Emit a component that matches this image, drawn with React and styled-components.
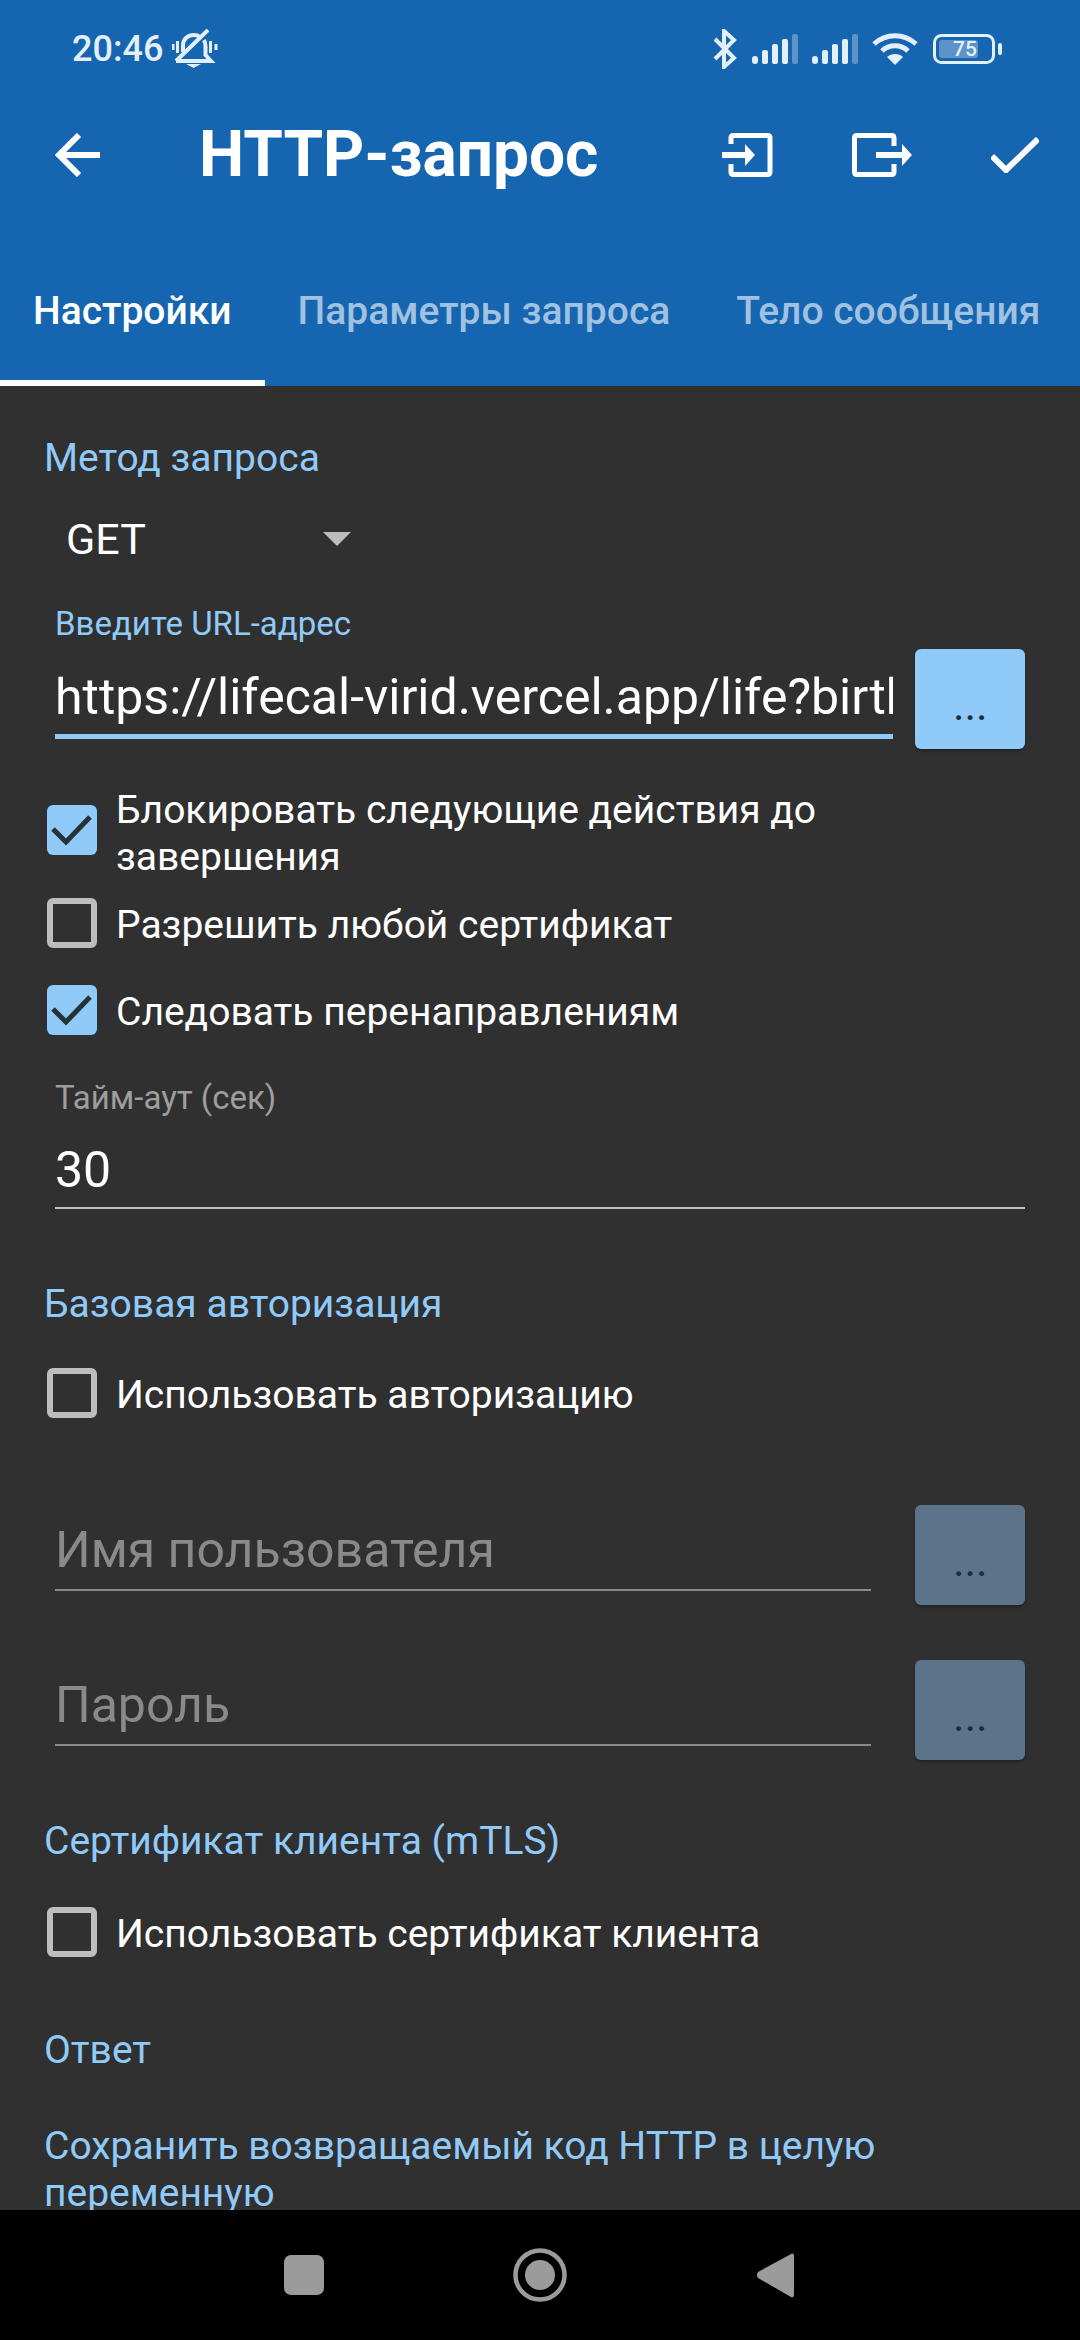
import React from "react";
import styled, { createGlobalStyle } from "styled-components";

const Global = createGlobalStyle`
  html, body { margin: 0; padding: 0; background: #000; }
  * { box-sizing: border-box; }
`;

const Page = styled.div`
  width: 1080px;
  height: 2340px;
  display: flex;
  flex-direction: column;
  overflow: hidden;
  font-family: Roboto, "Noto Sans", sans-serif;
  background: #303030;
  color: #fff;
`;

const Header = styled.header`
  background: #1565b0;
  height: 386px;
  flex: none;
  display: flex;
  flex-direction: column;
`;

const StatusBar = styled.div`
  height: 98px;
  display: flex;
  align-items: center;
  justify-content: space-between;
  padding: 0 78px 0 72px;
  color: #e3f0fb;
`;

const StatusGroup = styled.div`
  display: flex;
  align-items: center;
  gap: ${p => p.$gap || 0}px;
`;

const StatusGap = styled.span`
  flex: none;
  width: ${p => p.$w}px;
`;

const Clock = styled.span`
  font-size: 36px;
  font-weight: 500;
  line-height: 40px;
`;

const BatteryWrap = styled.div`
  position: relative;
  width: 69px;
  height: 30px;
`;

const BatteryText = styled.span`
  position: absolute;
  left: 6px;
  width: 52px;
  top: 0;
  text-align: center;
  font-size: 21px;
  font-weight: 500;
  line-height: 30px;
  color: #e3f0fb;
`;

const Toolbar = styled.div`
  height: 114px;
  display: flex;
  align-items: center;
  padding-left: 55px;
`;

const ToolbarTitle = styled.h1`
  margin: 0 0 0 99px;
  width: 523px;
  font-size: 64px;
  font-weight: 700;
  line-height: 66px;
  color: #fff;
  white-space: nowrap;
`;

const ToolIcon = styled.svg`
  display: block;
  flex: none;
  margin-left: ${p => p.$ml || 0}px;
`;

const TabBar = styled.nav`
  margin-top: 22px;
  height: 152px;
  display: flex;
  overflow: hidden;
`;

const Tab = styled.div`
  flex: none;
  display: flex;
  align-items: center;
  padding: 8px ${p => p.$pad}px 0;
  font-size: 39px;
  font-weight: 500;
  white-space: nowrap;
  color: ${p => (p.$active ? "#ffffff" : "#a1c1e0")};
  border-bottom: 6px solid ${p => (p.$active ? "#ffffff" : "transparent")};
`;

const Content = styled.main`
  flex: 1;
  min-height: 0;
  overflow: hidden;
  padding: 0 55px 0 44px;
`;

const SectionLabel = styled.div`
  margin-top: ${p => p.$mt}px;
  font-size: 39px;
  line-height: 47px;
  color: #90caf9;
`;

const Spinner = styled.div`
  margin-top: 22px;
  margin-left: 1px;
  height: 70px;
  width: 306px;
  padding-left: 21px;
  display: flex;
  align-items: center;
  justify-content: space-between;
  font-size: 43px;
  color: #fff;
`;

const SpinnerArrow = styled.span`
  width: 0;
  height: 0;
  border-left: 14px solid transparent;
  border-right: 14px solid transparent;
  border-top: 14px solid #bdbdbd;
`;

const FieldLabel = styled.div`
  margin-top: ${p => p.$mt}px;
  margin-left: 11px;
  font-size: 33px;
  line-height: 36px;
  color: ${p => p.$color || "#90caf9"};
`;

const FieldRow = styled.div`
  margin-top: ${p => p.$mt || 0}px;
  margin-left: 11px;
  display: flex;
  align-items: flex-start;
  justify-content: space-between;
`;

const Input = styled.div`
  width: ${p => p.$w};
  flex: none;
  overflow: hidden;
  white-space: nowrap;
  padding: ${p => p.$pt}px 0 ${p => p.$pb}px;
  font-size: 50px;
  line-height: 60px;
  color: ${p => p.$color || "#fff"};
  border-bottom: ${p => p.$line || "2px solid #bdbdbd"};
`;

const MoreButton = styled.div`
  width: 110px;
  height: 100px;
  flex: none;
  border-radius: 6px;
  display: flex;
  justify-content: center;
  padding: 38px 0 0 2px;
  font-size: 36px;
  font-weight: 500;
  letter-spacing: 1.5px;
  line-height: 42px;
  color: #1d2c3a;
  background: ${p => (p.$disabled ? "#5b7489" : "#90caf9")};
  box-shadow: 0 2px 3px rgba(0, 0, 0, 0.3);
`;

const CheckRow = styled.div`
  margin-top: ${p => p.$mt}px;
  margin-left: 3px;
  display: flex;
  align-items: center;
  gap: 19px;
`;

const CheckBox = styled.div`
  width: 50px;
  height: 50px;
  flex: none;
  margin-top: ${p => -p.$up}px;
  margin-bottom: -5px;
  border-radius: 6px;
  display: flex;
  align-items: center;
  justify-content: center;
  background: ${p => (p.$checked ? "#90caf9" : "transparent")};
  border: ${p => (p.$checked ? "none" : "6px solid #bdbdbd")};
`;

const CheckText = styled.div`
  font-size: 39px;
  line-height: 47px;
  color: #fff;
`;

const BottomNav = styled.footer`
  height: 130px;
  flex: none;
  background: #000;
  position: relative;
  z-index: 1;
  display: flex;
  align-items: center;
  padding: 0 0 0 284px;
`;

const NavSquare = styled.span`
  width: 40px;
  height: 40px;
  border-radius: 7px;
  background: #9b9b9b;
`;

const NavIcon = styled.svg`
  display: block;
  flex: none;
  margin-left: ${p => p.$ml}px;
`;

const Check = ({ checked, up = 10 }) => (
  <CheckBox $checked={checked} $up={up}>
    {checked && (
      <svg width="50" height="50" viewBox="0 0 50 50">
        <path d="M6 24 L19 37 L43 12" fill="none" stroke="#263238" strokeWidth="5" />
      </svg>
    )}
  </CheckBox>
);

const Signal = () => (
  <svg width="48" height="30" viewBox="0 0 48 30">
    <rect x="0" y="22" width="6" height="8" rx="3" fill="#e3f0fb" />
    <rect x="10" y="16" width="6" height="14" rx="2" fill="#e3f0fb" />
    <rect x="20" y="10" width="6" height="20" rx="2" fill="#e3f0fb" />
    <rect x="30" y="5" width="6" height="25" rx="2" fill="#e3f0fb" />
    <rect x="40" y="0" width="6" height="30" rx="2" fill="#5d93c9" />
  </svg>
);

export default function App() {
  return (
    <Page>
      <Global />
      <Header>
        <StatusBar>
          <StatusGroup $gap={9}>
            <Clock>20:46</Clock>
            <svg width="46" height="40" viewBox="0 0 46 40" fill="none" stroke="#e3f0fb">
              <path d="M11 23 V16 C11 10 16 6 22 6 C24 6 26 6.5 27 7.5 M32 11 C33 13 33.5 15 33.5 17 V26 L39 32 H4" strokeWidth="4" />
              <path d="M36 1 L4 32" strokeWidth="4" />
              <path d="M1 15 V21 M5.5 12 V24 M38.5 12 V24 M44 15 V21" strokeWidth="3" />
              <path d="M14 35 H29 L21.5 39 Z" fill="#e3f0fb" stroke="none" />
            </svg>
          </StatusGroup>
          <StatusGroup>
            <svg width="24" height="40" viewBox="0 0 24 40" fill="none" stroke="#e3f0fb" strokeWidth="4">
              <path d="M2 10 L21 29 L11 38 V2 L21 11 L2 30" />
            </svg>
            <StatusGap $w={15} />
            <Signal />
            <StatusGap $w={12} />
            <Signal />
            <StatusGap $w={12} />
            <svg width="46" height="32" viewBox="0 0 46 32" fill="none" stroke="#e3f0fb" strokeWidth="5">
              <path d="M2 11 C14 0 32 0 44 11" />
              <path d="M10 18 C17 11 29 11 36 18" />
              <path d="M23 32 L15 24 C19 20 27 20 31 24 Z" fill="#e3f0fb" stroke="none" />
            </svg>
            <StatusGap $w={15} />
            <BatteryWrap>
              <svg width="69" height="30" viewBox="0 0 69 30">
                <rect x="1.5" y="1.5" width="59" height="27" rx="7" fill="none" stroke="#e3f0fb" strokeWidth="3" />
                <rect x="6" y="6" width="39" height="18" rx="3" fill="#5d93c9" />
                <rect x="65" y="9" width="4" height="12" rx="2" fill="#e3f0fb" />
              </svg>
              <BatteryText>75</BatteryText>
            </BatteryWrap>
          </StatusGroup>
        </StatusBar>
        <Toolbar>
          <svg width="45" height="44" viewBox="0 0 45 44" fill="none" stroke="#fff" strokeWidth="6">
            <path d="M24 2 L4 22 L24 42" />
            <path d="M4 22 H45" />
          </svg>
          <ToolbarTitle>HTTP-запрос</ToolbarTitle>
          <svg width="51" height="44" viewBox="0 0 51 44" fill="none" stroke="#fff" strokeWidth="5">
            <path d="M9 11 V5 Q9 2.5 11.5 2.5 H45.5 Q48 2.5 48 5 V39 Q48 41.5 45.5 41.5 H11.5 Q9 41.5 9 39 V31" />
            <path d="M0 22 H26" strokeWidth="6" />
            <path d="M23 11 L33 22 L23 33 Z" fill="#fff" stroke="none" />
          </svg>
          <ToolIcon $ml={79} width="61" height="44" viewBox="0 0 61 44" fill="none" stroke="#fff" strokeWidth="5">
            <path d="M42 13 V5 Q42 2.5 39.5 2.5 H5 Q2.5 2.5 2.5 5 V39 Q2.5 41.5 5 41.5 H39.5 Q42 41.5 42 39 V31" />
            <path d="M24 22 H52" strokeWidth="6" />
            <path d="M50 11 L60 22 L50 33 Z" fill="#fff" stroke="none" />
          </ToolIcon>
          <ToolIcon $ml={78} width="48" height="36" viewBox="0 0 48 36" fill="none" stroke="#fff" strokeWidth="6">
            <path d="M1 19 L15 33 L47 2" />
          </ToolIcon>
        </Toolbar>
        <TabBar>
          <Tab $active $pad={33}>Настройки</Tab>
          <Tab $pad={33}>Параметры запроса</Tab>
          <Tab $pad={33}>Тело сообщения</Tab>
        </TabBar>
      </Header>
      <Content>
        <SectionLabel $mt={49}>Метод запроса</SectionLabel>
        <Spinner>
          GET
          <SpinnerArrow />
        </Spinner>
        <FieldLabel $mt={32}>Введите URL-адрес</FieldLabel>
        <FieldRow $mt={7}>
          <Input $w="838px" $pt={18} $pb={7} $line="5px solid #90caf9">
            https://lifecal-virid.vercel.app/life?birth
          </Input>
          <MoreButton>...</MoreButton>
        </FieldRow>
        <CheckRow $mt={38}>
          <Check checked up={14} />
          <CheckText>
            Блокировать следующие действия до
            <br />
            завершения
          </CheckText>
        </CheckRow>
        <CheckRow $mt={21}>
          <Check />
          <CheckText>Разрешить любой сертификат</CheckText>
        </CheckRow>
        <CheckRow $mt={40}>
          <Check checked />
          <CheckText>Следовать перенаправлениям</CheckText>
        </CheckRow>
        <FieldLabel $mt={44} $color="#9e9e9e">Тайм-аут (сек)</FieldLabel>
        <FieldRow>
          <Input $w="970px" $pt={24} $pb={7}>30</Input>
        </FieldRow>
        <SectionLabel $mt={72}>Базовая авторизация</SectionLabel>
        <CheckRow $mt={44}>
          <Check />
          <CheckText>Использовать авторизацию</CheckText>
        </CheckRow>
        <FieldRow $mt={86}>
          <Input $w="816px" $pt={15} $pb={9} $color="#8a8a8a" $line="2px solid #8a8a8a">Имя пользователя</Input>
          <MoreButton $disabled>...</MoreButton>
        </FieldRow>
        <FieldRow $mt={55}>
          <Input $w="816px" $pt={15} $pb={9} $color="#8a8a8a" $line="2px solid #8a8a8a">Пароль</Input>
          <MoreButton $disabled>...</MoreButton>
        </FieldRow>
        <SectionLabel $mt={58}>Сертификат клиента (mTLS)</SectionLabel>
        <CheckRow $mt={46}>
          <Check />
          <CheckText>Использовать сертификат клиента</CheckText>
        </CheckRow>
        <SectionLabel $mt={69}>Ответ</SectionLabel>
        <SectionLabel $mt={49}>
          Сохранить возвращаемый код HTTP в целую
          <br />
          переменную
        </SectionLabel>
      </Content>
      <BottomNav>
        <NavSquare />
        <NavIcon $ml={189} width="54" height="54" viewBox="0 0 54 54">
          <circle cx="27" cy="27" r="24.5" fill="none" stroke="#9b9b9b" strokeWidth="4.5" />
          <circle cx="27" cy="27" r="15" fill="#9b9b9b" />
        </NavIcon>
        <NavIcon $ml={189} width="38" height="46" viewBox="0 0 38 46">
          <path d="M36 1.5 Q38 1 38 4 V43 Q38 46 35 45 L2 26 Q0 23 2 20 Z" fill="#9b9b9b" />
        </NavIcon>
      </BottomNav>
    </Page>
  );
}
